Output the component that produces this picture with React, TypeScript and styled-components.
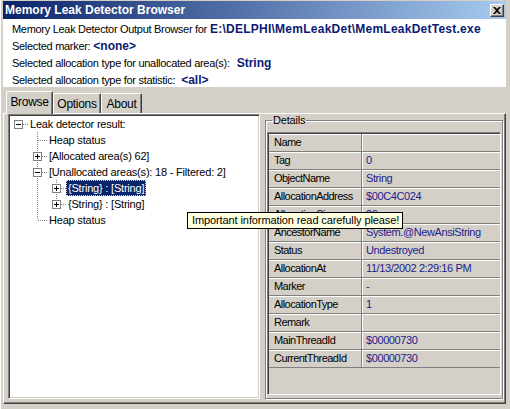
import styled, { createGlobalStyle } from "styled-components";

const GlobalStyle = createGlobalStyle`
  html, body {
    margin: 0;
    padding: 0;
    background: #d4d0c8;
  }
  body {
    font-family: "Liberation Sans", Arial, sans-serif;
    font-size: 11px;
    color: #000;
  }
`;

type TreeItem = {
  label: string;
  level: number;
  expander?: "plus" | "minus";
  last?: boolean;
  guides?: boolean[];
  selected?: boolean;
};

const treeItems: TreeItem[] = [
  { label: "Leak detector result:", level: 0, expander: "minus", last: true },
  { label: "Heap status", level: 1, guides: [false] },
  { label: "[Allocated area(s) 62]", level: 1, expander: "plus", guides: [false] },
  { label: "[Unallocated areas(s): 18 - Filtered: 2]", level: 1, expander: "minus", guides: [false] },
  { label: "{String} : [String]", level: 2, expander: "plus", guides: [false, true], selected: true },
  { label: "{String} : [String]", level: 2, expander: "plus", last: true, guides: [false, true] },
  { label: "Heap status", level: 1, last: true, guides: [false] },
];

const details: [string, string][] = [
  ["Name", ""],
  ["Tag", "0"],
  ["ObjectName", "String"],
  ["AllocationAddress", "$00C4C024"],
  ["AllocationSize", "26"],
  ["AncestorName", "System.@NewAnsiString"],
  ["Status", "Undestroyed"],
  ["AllocationAt", "11/13/2002 2:29:16 PM"],
  ["Marker", "-"],
  ["AllocationType", "1"],
  ["Remark", ""],
  ["MainThreadId", "$00000730"],
  ["CurrentThreadId", "$00000730"],
];

const ExpanderIcon = ({ kind }: { kind: "plus" | "minus" }) => (
  <svg width="9" height="9" viewBox="0 0 9 9">
    <rect x="0.5" y="0.5" width="8" height="8" fill="#fff" stroke="#808080" />
    <line x1="2" y1="4.5" x2="7" y2="4.5" stroke="#000" />
    {kind === "plus" && <line x1="4.5" y1="2" x2="4.5" y2="7" stroke="#000" />}
  </svg>
);

const CloseIcon = () => (
  <svg width="8" height="7" viewBox="0 0 8 7">
    <path d="M0 0h2l2 2 2-2h2L5 3.5 8 7H6L4 5 2 7H0l3-3.5z" fill="#000" />
  </svg>
);

const App = (): JSX.Element => {
  return (
    <Window>
      <GlobalStyle />
      <TitleBar>
        <Title>Memory Leak Detector Browser</Title>
        <CloseButton>
          <CloseIcon />
        </CloseButton>
      </TitleBar>
      <InfoPanel>
        <InfoLine>
          Memory Leak Detector Output Browser for
          <InfoValue $wide>E:\DELPHI\MemLeakDet\MemLeakDetTest.exe</InfoValue>
        </InfoLine>
        <InfoLine>
          Selected marker:
          <InfoValue>&lt;none&gt;</InfoValue>
        </InfoLine>
        <InfoLine>
          Selected allocation type for unallocated area(s):
          <InfoValue $gap={7}>String</InfoValue>
        </InfoLine>
        <InfoLine>
          Selected allocation type for statistic:
          <InfoValue $gap={6}>&lt;all&gt;</InfoValue>
        </InfoLine>
      </InfoPanel>
      <TabStrip>
        <Tab $active $width={47}>Browse</Tab>
        <Tab $width={48}>Options</Tab>
        <Tab $width={41}>About</Tab>
      </TabStrip>
      <Sheet>
        <TreePanel>
          {treeItems.map((item, i) => (
            <TreeRow key={i}>
              {(item.guides ?? []).slice(0, item.level).map((on, g) => (
                <GuideCell key={g} $on={on} />
              ))}
              <NodeCell $root={item.level === 0} $last={item.last}>
                {item.expander && <ExpanderIcon kind={item.expander} />}
              </NodeCell>
              <TreeLabel $selected={item.selected}>{item.label}</TreeLabel>
            </TreeRow>
          ))}
        </TreePanel>
        <GroupBox>
          <GroupLegend>Details</GroupLegend>
          <Grid>
            {details.map(([key, value]) => (
              <GridRow key={key}>
                <KeyCell>{key}</KeyCell>
                <ValueCell>{value}</ValueCell>
              </GridRow>
            ))}
          </Grid>
        </GroupBox>
      </Sheet>
      <Tooltip>Important information read carefully please!</Tooltip>
    </Window>
  );
};

const Window = styled.div`
  position: relative;
  width: 510px;
  height: 409px;
  box-sizing: border-box;
  padding: 1px 4px 0 3px;
  background: #d4d0c8;
  box-shadow: inset 1px 0 0 #ffffff;
  display: flex;
  flex-direction: column;
  overflow: hidden;
`;

const TitleBar = styled.div`
  height: 18px;
  display: flex;
  align-items: center;
  justify-content: space-between;
  padding: 0 2px 0 2px;
  background: linear-gradient(to right, #0a246a, #a6caf0);
`;

const Title = styled.span`
  color: #fff;
  font-weight: bold;
  font-size: 12px;
  line-height: 18px;
`;

const CloseButton = styled.div`
  width: 14px;
  height: 13px;
  box-sizing: border-box;
  display: flex;
  align-items: center;
  justify-content: center;
  background: #d4d0c8;
  border: 1px solid;
  border-color: #ffffff #404040 #404040 #ffffff;
  box-shadow: inset -1px -1px 0 #808080;
`;

const InfoPanel = styled.div`
  height: 68px;
  box-sizing: border-box;
  padding: 2px 0 0 9px;
  background: #ffffff;
`;

const InfoLine = styled.div`
  height: 17px;
  line-height: 17px;
  white-space: nowrap;
  letter-spacing: -0.3px;
`;

const InfoValue = styled.span<{ $gap?: number; $wide?: boolean }>`
  margin-left: ${(p) => p.$gap ?? 3}px;
  font-weight: bold;
  font-size: 12px;
  color: #0c1a72;
  letter-spacing: ${(p) => (p.$wide ? "0.25px" : "0")};
`;

const TabStrip = styled.div`
  height: 22px;
  margin-top: 4px;
  padding-left: 3px;
  display: flex;
  align-items: flex-end;
  position: relative;
  z-index: 1;
`;

const Tab = styled.div<{ $active?: boolean; $width: number }>`
  width: ${(p) => p.$width}px;
  height: ${(p) => (p.$active ? 23 : 20)}px;
  margin-bottom: ${(p) => (p.$active ? -1 : 0)}px;
  box-sizing: border-box;
  display: flex;
  align-items: ${(p) => (p.$active ? "flex-start" : "center")};
  padding-top: ${(p) => (p.$active ? 3 : 0)}px;
  justify-content: center;
  background: #d4d0c8;
  border-top: 1px solid #ffffff;
  border-left: 1px solid #ffffff;
  border-right: 1px solid #404040;
  box-shadow: inset -1px 0 0 #808080;
  border-radius: 2px 2px 0 0;
  font-size: 12px;
  letter-spacing: -0.3px;
`;

const Sheet = styled.div`
  height: 291px;
  box-sizing: border-box;
  display: flex;
  gap: 5px;
  padding: 0 1px 4px 4px;
  border: 1px solid;
  border-color: #ffffff #404040 #404040 #ffffff;
  box-shadow: inset -1px -1px 0 #808080;
`;

const TreePanel = styled.div`
  width: 252px;
  flex-shrink: 0;
  box-sizing: border-box;
  padding-top: 1px;
  padding-left: 1px;
  background: #ffffff;
  border: 1px solid;
  border-color: #808080 #ffffff #ffffff #808080;
  box-shadow: inset 1px 1px 0 #404040, inset -1px -1px 0 #d4d0c8;
`;

const TreeRow = styled.div`
  height: 16px;
  display: flex;
  align-items: center;
  white-space: nowrap;
`;

const dotsV = "repeating-linear-gradient(to bottom, #808080 0 1px, transparent 1px 2px)";
const dotsH = "repeating-linear-gradient(to right, #808080 0 1px, transparent 1px 2px)";

const GuideCell = styled.div<{ $on: boolean }>`
  width: 19px;
  height: 16px;
  flex-shrink: 0;
  background: ${(p) => (p.$on ? dotsV : "none")};
  background-size: 1px 16px;
  background-repeat: no-repeat;
  background-position: 8px 0;
`;

const NodeCell = styled.div<{ $root: boolean; $last?: boolean }>`
  position: relative;
  width: 19px;
  height: 16px;
  flex-shrink: 0;
  display: flex;
  align-items: center;
  padding-left: 4px;
  box-sizing: border-box;

  &::before {
    content: "";
    position: absolute;
    left: 8px;
    top: 0;
    width: 1px;
    height: ${(p) => (p.$root ? 0 : p.$last ? 8 : 16)}px;
    background: ${dotsV};
  }

  &::after {
    content: "";
    position: absolute;
    left: 9px;
    top: 8px;
    width: 10px;
    height: 1px;
    background: ${dotsH};
  }

  svg {
    position: relative;
    z-index: 1;
  }
`;

const TreeLabel = styled.span<{ $selected?: boolean }>`
  margin-left: -1px;
  padding: 0 2px;
  height: 16px;
  line-height: 16px;
  box-sizing: border-box;
  font-size: 11px;
  letter-spacing: -0.2px;
  background: ${(p) => (p.$selected ? "#0a246a" : "transparent")};
  color: ${(p) => (p.$selected ? "#ffffff" : "#000000")};
  outline: ${(p) => (p.$selected ? "1px dotted #d4d0c8" : "none")};
  outline-offset: -1px;
`;

const GroupBox = styled.fieldset`
  flex: 1;
  margin: 0 1px 0 0;
  padding: 1px 1px 3px 1px;
  min-width: 0;
  border: 1px solid #808080;
  box-shadow: inset 1px 1px 0 #ffffff, 1px 1px 0 #ffffff;
  display: flex;
  flex-direction: column;
`;

const GroupLegend = styled.legend`
  margin-left: 5px;
  padding: 0 1px;
  font-size: 11px;
  line-height: 13px;
  letter-spacing: -0.2px;
`;

const Grid = styled.div`
  flex: 1;
  margin-top: 4px;
  background: #d4d0c8;
  border: 1px solid;
  border-color: #808080 #ffffff #ffffff #808080;
  box-shadow: inset 1px 1px 0 #404040;
  padding: 1px 0 0 1px;
`;

const GridRow = styled.div`
  height: 18px;
  box-sizing: border-box;
  display: flex;
  border-bottom: 1px solid #808080;
  box-shadow: inset 0 1px 0 #ffffff;
`;

const KeyCell = styled.div`
  width: 93px;
  flex-shrink: 0;
  box-sizing: border-box;
  padding-left: 5px;
  line-height: 17px;
  font-size: 11px;
  letter-spacing: -0.55px;
  border-right: 1px solid #808080;
  white-space: nowrap;
  overflow: hidden;
`;

const ValueCell = styled.div`
  flex: 1;
  padding-left: 4px;
  line-height: 17px;
  font-size: 11px;
  letter-spacing: -0.4px;
  color: #1c1c8c;
  box-shadow: inset 1px 0 0 #ffffff;
  white-space: nowrap;
`;

const Tooltip = styled.div`
  position: absolute;
  left: 187px;
  top: 212px;
  height: 17px;
  box-sizing: border-box;
  padding: 0 3px 0 4px;
  line-height: 15px;
  font-size: 11px;
  letter-spacing: -0.1px;
  background: #ffffe1;
  border: 1px solid #000000;
  white-space: nowrap;
  z-index: 5;
`;

export default App;
